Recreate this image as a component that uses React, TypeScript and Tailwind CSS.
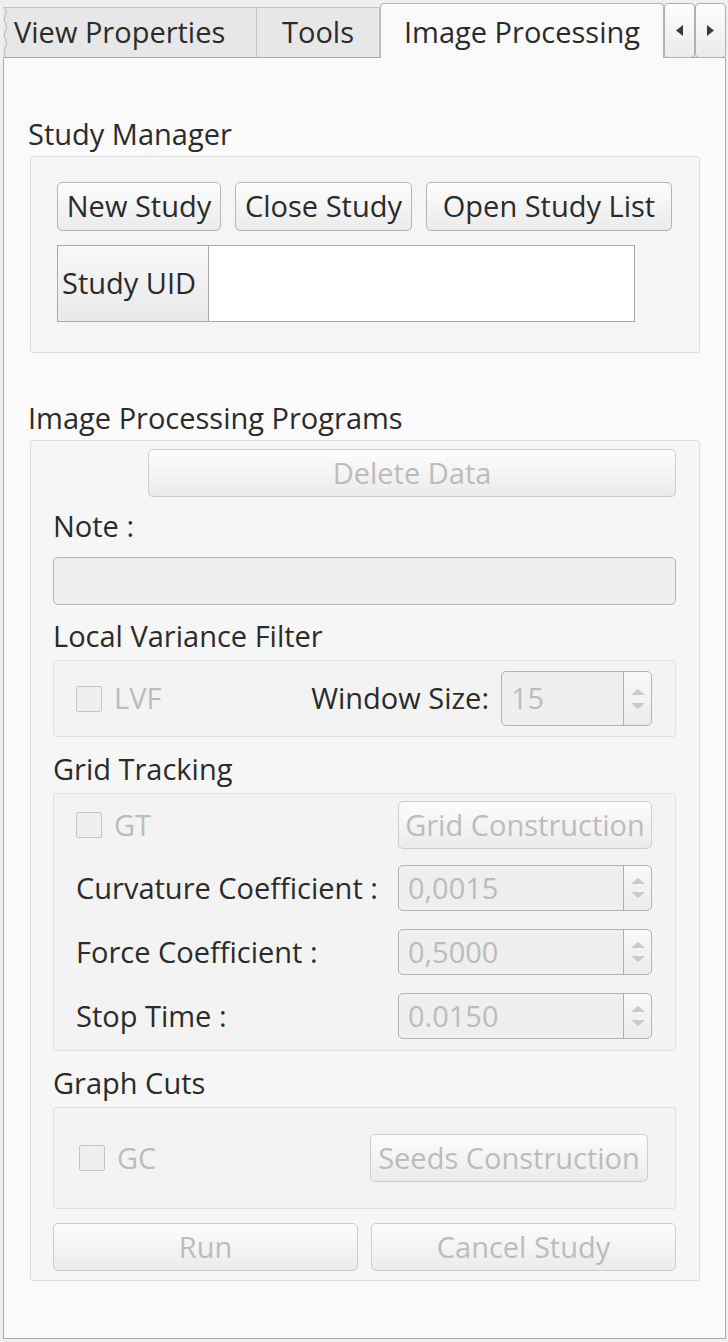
import React from "react";

const btnBase =
  "flex items-center justify-center whitespace-nowrap rounded-[5px] border bg-linear-to-b from-[#fdfdfd] to-[#ebebeb] pb-[2px]";
const btnOn = `${btnBase} border-[#b4b4b4] text-[#2b2b2b]`;
const btnOff = `${btnBase} border-[#cdcdcd] text-[#bcbcbc]`;

function SpinArrows() {
  return (
    <div className="flex w-[28px] flex-col items-center justify-center gap-[8px] rounded-r-[5px] border-l border-[#b3b3b3] bg-linear-to-b from-[#f9f9f9] to-[#ececec]">
      <svg width="14" height="6" viewBox="0 0 14 6">
        <path d="M7 0 L14 6 L0 6 Z" fill="#cacaca" />
      </svg>
      <svg width="14" height="6" viewBox="0 0 14 6">
        <path d="M0 0 L14 0 L7 6 Z" fill="#cacaca" />
      </svg>
    </div>
  );
}

function SpinBox({ value, className }: { value: string; className: string }) {
  return (
    <div
      className={`flex rounded-[5px] border border-[#b3b3b3] bg-[#efefef] ${className}`}
    >
      <div className="flex flex-1 items-center pb-[2px] pl-[9px] text-[#bcbcbc]">
        {value}
      </div>
      <SpinArrows />
    </div>
  );
}

function CheckBox({ label }: { label: string }) {
  return (
    <div className="flex items-center gap-[12px] text-[#bcbcbc]">
      <div className="h-[26px] w-[26px] rounded-[2px] border border-[#c6c6c6] bg-[#efefef]" />
      <span className="pb-[2px]">{label}</span>
    </div>
  );
}

function Label({ text, className }: { text: string; className: string }) {
  return (
    <div className={`flex items-center pb-[4px] text-[#2b2b2b] ${className}`}>
      {text}
    </div>
  );
}

export default function App() {
  return (
    <div className="h-[1342px] w-[728px] bg-[#efefef] pl-[3px] pr-[2px] pt-[3px] font-['Open_Sans',sans-serif] text-[29px] leading-none">
      {/* tab bar */}
      <div className="relative z-10 -mb-px flex h-[55px] items-start">
        <div className="relative mt-[4px] flex h-[50px] w-[254px] items-center border-r border-t border-[#c4c4c4] bg-[#e7e7e7] pb-[2px] pl-[11px] text-[#2b2b2b]">
          <svg
            className="absolute left-0 top-0"
            width="5"
            height="50"
            viewBox="0 0 5 50"
          >
            <path
              d="M2 0 Q5 4 2 8 Q0 12 3 16 Q5 20 2 24 Q0 28 3 32 Q5 36 2 40 Q0 44 3 50"
              fill="none"
              stroke="#b8b8b8"
              strokeWidth="1"
            />
          </svg>
          View Properties
        </div>
        <div className="mt-[4px] flex h-[50px] w-[123px] items-center justify-center border-r border-t border-[#c4c4c4] bg-[#e7e7e7] pb-[2px] text-[#2b2b2b]">
          Tools
        </div>
        <div className="flex h-[55px] w-[284px] items-center justify-center rounded-t-[4px] border-x border-t border-[#b4b4b4] bg-[#fafafa] text-[#2b2b2b]">
          Image Processing
        </div>
        <div className="flex h-[55px] w-[31px] items-center justify-center rounded-[4px] border border-[#b0b0b0] bg-linear-to-b from-[#fdfdfd] to-[#ebebeb]">
          <svg width="7" height="11" viewBox="0 0 7 11">
            <path d="M7 0 L7 11 L0 5.5 Z" fill="#3a3a3a" />
          </svg>
        </div>
        <div className="flex h-[55px] w-[31px] items-center justify-center rounded-[4px] border border-[#b0b0b0] bg-linear-to-b from-[#fdfdfd] to-[#ebebeb]">
          <svg width="7" height="11" viewBox="0 0 7 11">
            <path d="M0 0 L7 5.5 L0 11 Z" fill="#3a3a3a" />
          </svg>
        </div>
      </div>

      {/* pane */}
      <div className="h-[1282px] border border-[#a9a9a9] bg-[#fafafa] pl-[26px] pt-[56px]">
        <Label text="Study Manager" className="-ml-[2px] h-[42px]" />

        {/* Study Manager group */}
        <div className="h-[197px] w-[670px] rounded-[3px] border border-[#dedede] bg-[#f5f5f5] pl-[26px] pt-[25px]">
          <div className="flex gap-[14px]">
            <div className={`${btnOn} h-[49px] w-[164px]`}>New Study</div>
            <div className={`${btnOn} h-[49px] w-[177px]`}>Close Study</div>
            <div className={`${btnOn} h-[49px] w-[246px]`}>Open Study List</div>
          </div>
          <div className="mt-[14px] flex h-[77px]">
            <div className="flex w-[152px] items-center border border-[#a9a9a9] bg-linear-to-b from-[#f8f8f8] to-[#e9e9e9] pb-[2px] pl-[4px] text-[#2b2b2b]">
              Study UID
            </div>
            <div className="w-[426px] border border-l-0 border-[#a9a9a9] bg-white" />
          </div>
        </div>

        <Label text="Image Processing Programs" className="-ml-[2px] h-[87px] pt-[45px]" />

        {/* Image Processing Programs group */}
        <div className="flex h-[841px] w-[670px] flex-col rounded-[3px] border border-[#dedede] bg-[#f6f6f6] pl-[22px] pr-[23px] pt-[8px]">
          <div className={`${btnOff} h-[48px] w-[528px] self-end`}>Delete Data</div>

          <Label text="Note :" className="h-[60px]" />
          <div className="h-[48px] rounded-[5px] border border-[#b5b5b5] bg-[#efefef]" />

          <Label text="Local Variance Filter" className="h-[55px] pt-[9px]" />
          <div className="flex h-[77px] items-center rounded-[3px] border border-[#e0e0e0] bg-[#f3f3f3] pl-[22px] pr-[23px]">
            <CheckBox label="LVF" />
            <span className="ml-auto mr-[12px] pb-[2px] text-[#2b2b2b]">Window Size:</span>
            <SpinBox value="15" className="h-[55px] w-[151px]" />
          </div>

          <Label text="Grid Tracking" className="h-[56px] pt-[10px]" />
          <div className="flex h-[258px] flex-col rounded-[3px] border border-[#e0e0e0] bg-[#f3f3f3] pl-[22px] pr-[23px] pt-[7px]">
            <div className="flex h-[48px] items-center justify-between">
              <CheckBox label="GT" />
              <div className={`${btnOff} h-[48px] w-[254px]`}>Grid Construction</div>
            </div>
            <div className="mt-[16px] flex h-[46px] items-center justify-between">
              <span className="pb-[2px] text-[#2b2b2b]">Curvature Coefficient :</span>
              <SpinBox value="0,0015" className="h-[46px] w-[254px]" />
            </div>
            <div className="mt-[18px] flex h-[46px] items-center justify-between">
              <span className="pb-[2px] text-[#2b2b2b]">Force Coefficient :</span>
              <SpinBox value="0,5000" className="h-[46px] w-[254px]" />
            </div>
            <div className="mt-[18px] flex h-[46px] items-center justify-between">
              <span className="pb-[2px] text-[#2b2b2b]">Stop Time :</span>
              <SpinBox value="0.0150" className="h-[46px] w-[254px]" />
            </div>
          </div>

          <Label text="Graph Cuts" className="h-[56px] pt-[10px]" />
          <div className="flex h-[102px] items-center justify-between rounded-[3px] border border-[#e0e0e0] bg-[#f3f3f3] pl-[25px] pr-[27px]">
            <CheckBox label="GC" />
            <div className={`${btnOff} h-[48px] w-[278px]`}>Seeds Construction</div>
          </div>

          <div className="mt-[14px] flex gap-[13px]">
            <div className={`${btnOff} h-[48px] flex-1`}>Run</div>
            <div className={`${btnOff} h-[48px] flex-1`}>Cancel Study</div>
          </div>
        </div>
      </div>
    </div>
  );
}
